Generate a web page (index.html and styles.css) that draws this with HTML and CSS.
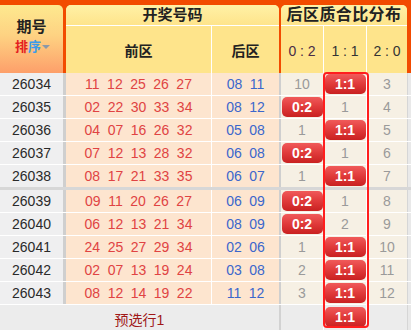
FILE: index.html
```html
<!DOCTYPE html>
<html lang="zh-CN">
<head>
<meta charset="utf-8">
<title>后区质合比分布</title>
<link rel="stylesheet" href="styles.css">
</head>
<body>
<div class="board">
  <div class="head">
    <div class="h-qh">
      <div class="qh">期号</div>
      <div class="sort"><span class="pai">排</span><span class="xu">序</span><span class="tri"></span></div>
    </div>
    <div class="h-kj">
      <div class="h-title">开奖号码</div>
      <div class="h-sub">
        <div class="s-front">前区</div>
        <div class="s-back">后区</div>
      </div>
    </div>
    <div class="h-fb">
      <div class="h-title wide">后区质合比分布</div>
      <div class="h-sub">
        <div class="s-f02 purple">0 : 2</div>
        <div class="s-f11">1 : 1</div>
        <div class="s-f20">2 : 0</div>
      </div>
    </div>
  </div>

  <div class="rows">
    <div class="row"><div class="c-qh">26034</div><div class="c-front"><span>11</span><span>12</span><span>25</span><span>26</span><span>27</span></div><div class="c-back"><span>08</span><span>11</span></div><div class="c-f02">10</div><div class="c-f11"><span class="badge">1:1</span></div><div class="c-f20">3</div><div class="c-end"></div></div>
    <div class="row"><div class="c-qh">26035</div><div class="c-front"><span>02</span><span>22</span><span>30</span><span>33</span><span>34</span></div><div class="c-back"><span>08</span><span>12</span></div><div class="c-f02"><span class="badge">0:2</span></div><div class="c-f11">1</div><div class="c-f20">4</div><div class="c-end"></div></div>
    <div class="row"><div class="c-qh">26036</div><div class="c-front"><span>04</span><span>07</span><span>16</span><span>26</span><span>32</span></div><div class="c-back"><span>05</span><span>08</span></div><div class="c-f02">1</div><div class="c-f11"><span class="badge">1:1</span></div><div class="c-f20">5</div><div class="c-end"></div></div>
    <div class="row"><div class="c-qh">26037</div><div class="c-front"><span>07</span><span>12</span><span>13</span><span>28</span><span>32</span></div><div class="c-back"><span>06</span><span>08</span></div><div class="c-f02"><span class="badge">0:2</span></div><div class="c-f11">1</div><div class="c-f20">6</div><div class="c-end"></div></div>
    <div class="row sep"><div class="c-qh">26038</div><div class="c-front"><span>08</span><span>17</span><span>21</span><span>33</span><span>35</span></div><div class="c-back"><span>06</span><span>07</span></div><div class="c-f02">1</div><div class="c-f11"><span class="badge">1:1</span></div><div class="c-f20">7</div><div class="c-end"></div></div>
    <div class="row"><div class="c-qh">26039</div><div class="c-front"><span>09</span><span>11</span><span>20</span><span>26</span><span>27</span></div><div class="c-back"><span>06</span><span>09</span></div><div class="c-f02"><span class="badge">0:2</span></div><div class="c-f11">1</div><div class="c-f20">8</div><div class="c-end"></div></div>
    <div class="row"><div class="c-qh">26040</div><div class="c-front"><span>06</span><span>12</span><span>13</span><span>21</span><span>34</span></div><div class="c-back"><span>08</span><span>09</span></div><div class="c-f02"><span class="badge">0:2</span></div><div class="c-f11">2</div><div class="c-f20">9</div><div class="c-end"></div></div>
    <div class="row"><div class="c-qh">26041</div><div class="c-front"><span>24</span><span>25</span><span>27</span><span>29</span><span>34</span></div><div class="c-back"><span>02</span><span>06</span></div><div class="c-f02">1</div><div class="c-f11"><span class="badge">1:1</span></div><div class="c-f20">10</div><div class="c-end"></div></div>
    <div class="row"><div class="c-qh">26042</div><div class="c-front"><span>02</span><span>07</span><span>13</span><span>19</span><span>24</span></div><div class="c-back"><span>03</span><span>08</span></div><div class="c-f02">2</div><div class="c-f11"><span class="badge">1:1</span></div><div class="c-f20">11</div><div class="c-end"></div></div>
    <div class="row"><div class="c-qh">26043</div><div class="c-front"><span>08</span><span>12</span><span>14</span><span>19</span><span>22</span></div><div class="c-back"><span>11</span><span>12</span></div><div class="c-f02">3</div><div class="c-f11"><span class="badge">1:1</span></div><div class="c-f20">12</div><div class="c-end"></div></div>
  </div>

  <div class="foot">
    <div class="f-label">预选行1</div>
    <div class="c-f02"></div>
    <div class="c-f11"><span class="badge">1:1</span></div>
    <div class="c-f20"></div>
    <div class="c-end"></div>
  </div>

  <div class="hl-box"></div>
</div>
</body>
</html>
```

FILE: styles.css
```css
* { box-sizing: border-box; }
html, body { margin: 0; padding: 0; background: #fff; }
body {
  font-family: "Liberation Sans", Arial, "Noto Sans CJK SC", sans-serif;
  font-size: 14px;
  color: #333;
}
.board {
  position: relative;
  width: 411px;
  height: 330px;
  overflow: hidden;
}

/* ---------- header ---------- */
.head {
  display: flex;
  height: 73px;
  padding: 5px 4px 0 0;
  background: #f24b00;
}
.h-qh {
  width: 63px;
  height: 68px;
  border-radius: 0 5px 0 0;
  background: linear-gradient(#fde98f 0%, #fed282 45%, #fd9f6a 100%);
  display: flex;
  flex-direction: column;
  align-items: center;
}
.qh {
  margin-top: 13px;
  font-size: 15px;
  font-weight: bold;
  color: #222;
  line-height: 18px;
}
.sort {
  margin-top: 3px;
  display: flex;
  align-items: center;
  font-size: 13px;
  font-weight: bold;
  line-height: 16px;
  padding-left: 2px;
}
.pai { color: #e42020; }
.xu { color: #3a9bea; }
.tri {
  width: 0;
  height: 0;
  margin-left: 1px;
  border-left: 4px solid transparent;
  border-right: 4px solid transparent;
  border-top: 4px solid #8a98a8;
}
.h-kj {
  width: 213px;
  margin-left: 3px;
  height: 68px;
  border-radius: 5px 5px 0 0;
  background: #fee48b;
  display: flex;
  flex-direction: column;
  overflow: hidden;
}
.h-fb {
  width: 126px;
  margin-left: 2px;
  height: 68px;
  border-radius: 5px 5px 0 0;
  background: #fee48b;
  display: flex;
  flex-direction: column;
  overflow: hidden;
}
.h-title {
  height: 21px;
  border-bottom: 1px solid #fff;
  background: linear-gradient(#fff1a6, #fee48b);
  text-align: center;
  font-size: 15px;
  font-weight: bold;
  line-height: 20px;
  color: #222;
}
.h-title.wide {
  font-size: 16px;
  letter-spacing: 0.4px;
}
.h-sub {
  flex: 1;
  display: flex;
}
.h-sub > div {
  display: flex;
  align-items: center;
  justify-content: center;
  color: #222;
}
.s-front {
  width: 146px;
  border-right: 1px solid #fff;
  font-weight: bold;
  font-size: 14px;
}
.s-back {
  width: 67px;
  font-weight: bold;
  font-size: 14px;
}
.s-f02 { width: 43px; border-right: 1px solid #fff; padding-top: 3px; }
.s-f11 { width: 43px; border-right: 1px solid #fff; padding-top: 3px; }
.s-f20 { width: 40px; padding-top: 3px; }
.h-sub > .purple { color: #4a2d48; }
.h-sub > .s-f11, .h-sub > .s-f20 { color: #333; }

/* ---------- rows ---------- */
.row {
  display: flex;
  height: 23px;
  border-bottom: 1px solid #fff;
}
.row.sep {
  height: 25px;
  border-bottom: 3px solid #d7d7d7;
}
.row > div {
  display: flex;
  align-items: center;
  justify-content: center;
  height: 22px;
}
.c-qh {
  width: 66px;
  background: #efeff0;
  border-right: 3px solid #cfcfcf;
  color: #2a2a2a;
  font-size: 14px;
}
.c-front {
  width: 146px;
  background: #fde5cf;
  border-right: 1px solid #fff;
  color: #e04343;
  gap: 7.5px;
}
.c-back {
  width: 69px;
  background: #fde5cf;
  border-right: 2px solid #cfcfcf;
  color: #3b67cc;
  gap: 7.5px;
}
.c-f02 {
  width: 43px;
  background: #f6f0e4;
  border-right: 1px solid #fff;
  color: #9a9a9a;
}
.c-f11 {
  width: 43px;
  background: #f6f0e4;
  border-right: 1px solid #fff;
  color: #9a9a9a;
}
.c-f20 {
  width: 40px;
  background: #f6f0e4;
  color: #9a9a9a;
}
.c-end {
  width: 4px;
  background: #e9e9e9;
  border-left: 1px solid #d6d6d6;
}

.badge {
  display: flex;
  align-items: center;
  justify-content: center;
  width: 41px;
  height: 20px;
  border-radius: 5px;
  background: linear-gradient(#f05a5a 0%, #e03a3a 50%, #c92121 100%);
  color: #fff;
  font-weight: bold;
  font-size: 14px;
  line-height: 20px;
}

/* ---------- footer ---------- */
.foot {
  display: flex;
  height: 25px;
  background: #ececec;
}
.foot > div {
  display: flex;
  align-items: center;
  justify-content: center;
  height: 25px;
}
.f-label {
  width: 281px;
  border-right: 2px solid #d2d2d2;
  color: #a01818;
  font-size: 14px;
  padding-top: 2px;
}
.foot .c-f02, .foot .c-f11, .foot .c-f20 { background: #ececec; }
.foot .c-f11 { align-items: flex-start; padding-top: 2px; }

/* ---------- highlight frame over the 1:1 column ---------- */
.hl-box {
  position: absolute;
  left: 323px;
  top: 72px;
  width: 46px;
  height: 256px;
  border: 2px solid #ff1e1e;
  border-radius: 4px;
  pointer-events: none;
}
```
